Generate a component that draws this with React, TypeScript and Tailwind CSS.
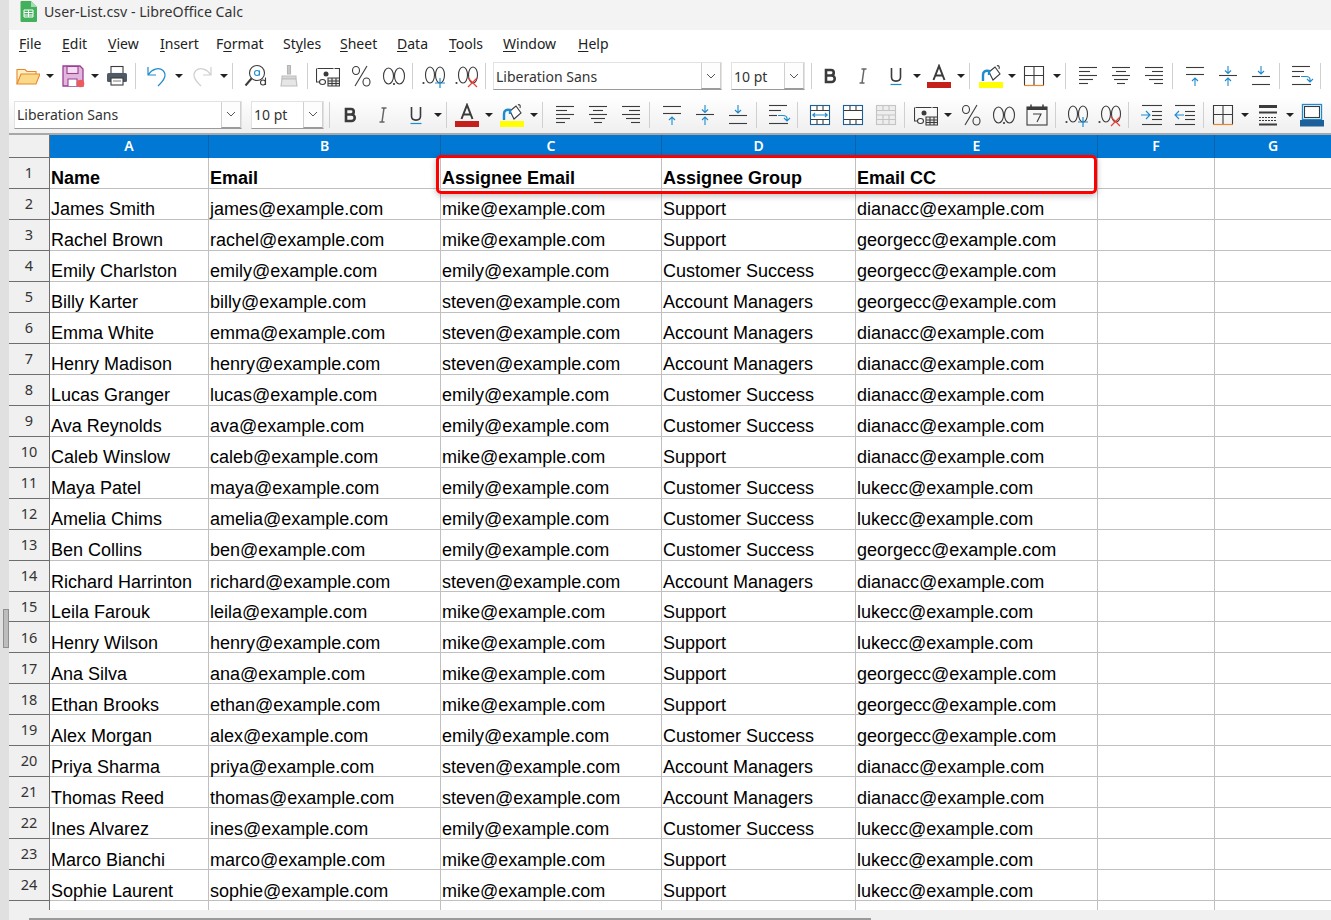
import React from "react";

const DARK = "#3b3b3b";
const BLUE = "#1e8bcd";

const rows = [
  ["James Smith", "james@example.com", "mike@example.com", "Support", "dianacc@example.com"],
  ["Rachel Brown", "rachel@example.com", "mike@example.com", "Support", "georgecc@example.com"],
  ["Emily Charlston", "emily@example.com", "emily@example.com", "Customer Success", "georgecc@example.com"],
  ["Billy Karter", "billy@example.com", "steven@example.com", "Account Managers", "georgecc@example.com"],
  ["Emma White", "emma@example.com", "steven@example.com", "Account Managers", "dianacc@example.com"],
  ["Henry Madison", "henry@example.com", "steven@example.com", "Account Managers", "dianacc@example.com"],
  ["Lucas Granger", "lucas@example.com", "emily@example.com", "Customer Success", "dianacc@example.com"],
  ["Ava Reynolds", "ava@example.com", "emily@example.com", "Customer Success", "dianacc@example.com"],
  ["Caleb Winslow", "caleb@example.com", "mike@example.com", "Support", "dianacc@example.com"],
  ["Maya Patel", "maya@example.com", "emily@example.com", "Customer Success", "lukecc@example.com"],
  ["Amelia Chims", "amelia@example.com", "emily@example.com", "Customer Success", "lukecc@example.com"],
  ["Ben Collins", "ben@example.com", "emily@example.com", "Customer Success", "georgecc@example.com"],
  ["Richard Harrinton", "richard@example.com", "steven@example.com", "Account Managers", "dianacc@example.com"],
  ["Leila Farouk", "leila@example.com", "mike@example.com", "Support", "lukecc@example.com"],
  ["Henry Wilson", "henry@example.com", "mike@example.com", "Support", "lukecc@example.com"],
  ["Ana Silva", "ana@example.com", "mike@example.com", "Support", "georgecc@example.com"],
  ["Ethan Brooks", "ethan@example.com", "mike@example.com", "Support", "georgecc@example.com"],
  ["Alex Morgan", "alex@example.com", "emily@example.com", "Customer Success", "georgecc@example.com"],
  ["Priya Sharma", "priya@example.com", "steven@example.com", "Account Managers", "dianacc@example.com"],
  ["Thomas Reed", "thomas@example.com", "steven@example.com", "Account Managers", "dianacc@example.com"],
  ["Ines Alvarez", "ines@example.com", "emily@example.com", "Customer Success", "lukecc@example.com"],
  ["Marco Bianchi", "marco@example.com", "mike@example.com", "Support", "lukecc@example.com"],
  ["Sophie Laurent", "sophie@example.com", "mike@example.com", "Support", "lukecc@example.com"],
];

const colW = ["w-[159px]", "w-[232px]", "w-[221px]", "w-[194px]", "w-[242px]", "w-[117px]", "w-[117px]"];
const colNames = ["A", "B", "C", "D", "E", "F", "G"];

function Ic({ children }: { children: React.ReactNode }) {
  return (
    <div className="flex h-[33px] w-[33px] shrink-0 items-center justify-center">
      <svg width="24" height="24" viewBox="0 0 24 24" fill="none" strokeWidth="1.1">
        {children}
      </svg>
    </div>
  );
}

function Arrow({ cls = "w-[12px]" }: { cls?: string }) {
  return (
    <div className={"flex shrink-0 justify-center " + cls}>
      <div className="h-0 w-0 border-x-[4px] border-t-[4px] border-x-transparent border-t-[#222]" />
    </div>
  );
}

function Sep({ cls = "w-[8px]" }: { cls?: string }) {
  return (
    <div className={"flex shrink-0 pl-[2px] " + cls}>
      <div className="h-[26px] w-px bg-[#d0d0d0]" />
    </div>
  );
}

function Combo({ label, cls, btn }: { label: string; cls: string; btn: string }) {
  return (
    <div className={"flex h-[28px] shrink-0 items-center justify-between border border-[#e2e2e2] border-b-[#9a9a9a] bg-white " + cls}>
      <span className="pl-[2px] font-['Noto_Sans',sans-serif] text-[14px] text-[#333]">{label}</span>
      <div className={"flex h-[26px] items-center justify-center border-x border-[#d0d0d0] border-b border-b-[#9a9a9a] bg-[#fdfdfd] " + btn}>
        <svg width="10" height="6" viewBox="0 0 10 6" fill="none" stroke="#555" strokeWidth="1">
          <path d="M1 1l4 4 4-4" />
        </svg>
      </div>
    </div>
  );
}

const Lines = ({ ys }: { ys: [number, number, number][] }) => (
  <>
    {ys.map(([y, a, b], i) => (
      <path key={i} d={`M${a} ${y}H${b}`} stroke={DARK} />
    ))}
  </>
);

const AlignLeft = () => (
  <Ic><Lines ys={[[3.5, 3, 21], [7.5, 3, 14], [11.5, 3, 21], [15.5, 3, 17], [19.5, 3, 12]]} /></Ic>
);
const AlignCenter = () => (
  <Ic><Lines ys={[[3.5, 3, 21], [7.5, 7, 17], [11.5, 3, 21], [15.5, 5, 19], [19.5, 8, 16]]} /></Ic>
);
const AlignRight = () => (
  <Ic><Lines ys={[[3.5, 3, 21], [7.5, 10, 21], [11.5, 3, 21], [15.5, 7, 21], [19.5, 12, 21]]} /></Ic>
);
const VTop = () => (
  <Ic>
    <Lines ys={[[3.5, 3, 21], [10.5, 3, 21]]} />
    <path d="M12 22V14M9 17l3-3 3 3" stroke={BLUE} />
  </Ic>
);
const VMid = () => (
  <Ic>
    <Lines ys={[[11.5, 3, 21]]} />
    <path d="M12 2v7M9 6.500l3 3 3-3M12 22v-7M9 17l3-3 3 3" stroke={BLUE} />
  </Ic>
);
const VBot = () => (
  <Ic>
    <Lines ys={[[12.5, 3, 21], [20.5, 3, 21]]} />
    <path d="M12 2v8M9 7l3 3 3-3" stroke={BLUE} />
  </Ic>
);
const Wrap = () => (
  <Ic>
    <Lines ys={[[2.5, 2, 20], [7.5, 2, 14], [12.5, 2, 10], [20.5, 2, 21]]} />
    <path d="M11 12.500h5c3 0 4 1 4 3v2M17 15l3 3 3-3" stroke={BLUE} />
  </Ic>
);
const Bold = () => (
  <Ic>
    <path d="M8 6h5a2.700 2.700 0 0 1 0 5.500H8zM8 11.500h5.500a3 3 0 0 1 0 6.500H8z" stroke={DARK} strokeWidth="2.600" />
  </Ic>
);
const Italic = () => (
  <Ic>
    <path d="M10.500 5h5M8.500 19h5M13 5l-2 14" stroke="#666" strokeWidth="1.500" />
  </Ic>
);
const Under = () => (
  <Ic>
    <path d="M7.500 4v9c0 5.500 9 5.500 9 0V4" stroke={DARK} strokeWidth="1.600" />
    <path d="M6.500 20.500h11" stroke={BLUE} strokeWidth="1.200" />
  </Ic>
);
const FontColor = () => (
  <Ic>
    <path d="M6.500 16L12 2l5.500 14M8.500 11.500h7" stroke={DARK} strokeWidth="2" />
    <rect x="0" y="18" width="24" height="6" fill="#c4201c" />
  </Ic>
);
const BgColor = () => (
  <Ic>
    <path d="M10 8l6-5 5 7-7 6z" stroke={DARK} fill="#fff" />
    <path d="M18 2c1-1 3 0 2 3" stroke={DARK} />
    <path d="M4 17v-6c0-3 2-5 6-4v4" stroke={BLUE} strokeWidth="2.400" />
    <rect x="0" y="18" width="24" height="6" fill="#ffff00" />
  </Ic>
);
const Borders = () => (
  <Ic>
    <path d="M3 2.500h18.500V21M2.500 2v19M12 3v18M3 11.500h18" stroke={DARK} />
    <path d="M2 21.500h20" stroke="#e8872d" strokeWidth="1.200" />
  </Ic>
);
const Percent = () => (
  <Ic>
    <ellipse cx="7" cy="6.500" rx="3.500" ry="4" stroke={DARK} strokeWidth="1.100" />
    <ellipse cx="17.500" cy="18" rx="3.500" ry="4" stroke={DARK} strokeWidth="1.100" />
    <path d="M18 2L6 22" stroke={DARK} strokeWidth="1.100" />
  </Ic>
);
const Num = () => (
  <Ic>
    <ellipse cx="6.500" cy="12" rx="5" ry="8" stroke={DARK} />
    <ellipse cx="17.500" cy="12" rx="5" ry="8" stroke={DARK} />
    <circle cx="12" cy="20" r="1.100" fill={DARK} />
  </Ic>
);
const AddDec = () => (
  <Ic>
    <circle cx="1.500" cy="19" r="1.100" fill={DARK} />
    <ellipse cx="8" cy="11" rx="4.500" ry="8" stroke={DARK} />
    <ellipse cx="18" cy="11" rx="4.500" ry="8" stroke={DARK} />
    <path d="M18 14v10M13 19h10" stroke={BLUE} strokeWidth="1.200" />
  </Ic>
);
const RemDec = () => (
  <Ic>
    <circle cx="1.500" cy="19" r="1.100" fill={DARK} />
    <ellipse cx="8" cy="11" rx="4.500" ry="8" stroke={DARK} />
    <ellipse cx="18" cy="11" rx="4.500" ry="8" stroke={DARK} />
    <path d="M13 14l9 9M22 14l-9 9" stroke="#e5433a" strokeWidth="1.200" />
  </Ic>
);
const Currency = () => (
  <Ic>
    <path d="M3 18H0.500V4.500h23V14" stroke={DARK} strokeDasharray="16 1" />
    <circle cx="10" cy="10" r="2.500" fill={DARK} />
    <ellipse cx="6.500" cy="18" rx="3" ry="2.500" fill="#fff" stroke={DARK} />
    <path d="M12 14h4v8h-4zM16 14h4v8h-4zM20 14h3.500v8H20zM12 17h11M12 19.500h11" stroke={DARK} fill="#e6e6e6" />
  </Ic>
);
const Folder = () => (
  <Ic>
    <path d="M1 20V5.500h8l2 2h9V10" stroke="#e8872d" fill="#fff1c2" />
    <path d="M1 20l4-10h19l-4 10z" stroke="#e8872d" fill="#fbd98b" />
  </Ic>
);
const Save = () => (
  <Ic>
    <path d="M2 2h17l3 3v17H2z" stroke="#9b3f95" fill="#e3b7dd" strokeWidth="1.300" />
    <rect x="6" y="2.500" width="11" height="7" fill="#f3e1f1" stroke="#9b3f95" />
    <path d="M7 22v-7h9v7" stroke="#9b3f95" fill="#fff" />
    <circle cx="19.500" cy="19.500" r="3.800" fill="#ee5b5b" />
  </Ic>
);
const Print = () => (
  <Ic>
    <rect x="6" y="2.500" width="12" height="7" fill="#fff" stroke={DARK} />
    <rect x="2" y="9" width="20" height="9" rx="1.500" fill="#4e5a66" />
    <rect x="6" y="14" width="12" height="7" fill="#fff" stroke={DARK} />
    <path d="M8 17h8" stroke="#888" />
  </Ic>
);
const Undo = () => (
  <Ic>
    <path d="M3 3v8h8M3.500 10.500C7 5 14 3 18 6.500c4 4 2 9-5 15.500" stroke={BLUE} strokeWidth="1.200" />
  </Ic>
);
const Redo = () => (
  <Ic>
    <path d="M21 3v8h-8M20.500 10.500C17 5 10 3 6 6.500c-4 4-2 9 5 15.500" stroke="#cfcfcf" strokeWidth="1.200" />
  </Ic>
);
const Find = () => (
  <Ic>
    <circle cx="13" cy="9" r="7.500" stroke={DARK} />
    <path d="M7.500 14.500L1.500 21.500" stroke={DARK} strokeWidth="2" />
    <circle cx="13" cy="9" r="2.500" stroke={BLUE} />
    <path d="M15.500 6.500v5" stroke={BLUE} />
    <circle cx="19" cy="18.500" r="2.500" stroke={DARK} />
    <path d="M21.500 13.500v7.500" stroke={DARK} />
  </Ic>
);
const Brush = () => (
  <Ic>
    <path d="M10.500 1.500h3V10h-3z" fill="#c9c9c9" stroke="#b5b5b5" />
    <path d="M5 12h14v3H5z" fill="#d8d8d8" stroke="#bdbdbd" />
    <path d="M5 15h14l1 7H4z" fill="#e6e6e6" stroke="#bdbdbd" />
  </Ic>
);
const Table = ({ variant }: { variant: "h" | "v" | "x" }) => {
  const c = variant === "x" ? "#c4c4c4" : "#1d5f99";
  return (
    <Ic>
      <rect x="2.500" y="2.500" width="19" height="19" stroke={c} fill={variant === "x" ? "#eee" : "#fff"} />
      <path d="M3 7.500h18M3 16.500h18M9 3v4M15 3v4M9 17v4M15 17v4" stroke={variant === "x" ? c : DARK} />
      {variant === "x" && <path d="M3 12h18M9 12v5M15 12v5" stroke={c} />}
      {variant === "h" && <path d="M4 12h16M7 10l-2 2 2 2M17 10l2 2-2 2" stroke={BLUE} />}
    </Ic>
  );
};
const Calendar = () => (
  <Ic>
    <rect x="2" y="4" width="20" height="18" stroke={DARK} />
    <path d="M2 4h20v3H2z" fill={DARK} />
    <path d="M6 1.500v3M18 1.500v3" stroke={DARK} strokeWidth="1.500" />
    <path d="M8 11h8l-4 8" stroke={DARK} />
  </Ic>
);
const Indent = ({ dir }: { dir: "in" | "out" }) => (
  <Ic>
    <Lines ys={[[2.500, 2, 22], [8.500, 12, 22], [12.500, 12, 22], [16.500, 12, 22], [21.500, 2, 22]]} />
    {dir === "in" ? (
      <path d="M1 12h8M6 8l4 4-4 4" stroke={BLUE} />
    ) : (
      <path d="M11 12H3M6 8l-4 4 4 4" stroke={BLUE} />
    )}
  </Ic>
);
const LineStyle = () => (
  <Ic>
    <path d="M3 3.500h18" stroke={DARK} strokeWidth="3" />
    <path d="M3 9.500h18" stroke={DARK} strokeWidth="2" />
    <path d="M3 14.500h18M3 17.500h18" stroke={DARK} strokeDasharray="2 1" />
    <path d="M3 21.500h18" stroke={DARK} strokeWidth="2" />
  </Ic>
);
const BorderColor = () => (
  <Ic>
    <rect x="2.500" y="1.500" width="19" height="15" stroke={BLUE} fill="#fff" strokeWidth="1.300" />
    <rect x="4.500" y="3.500" width="15" height="11" stroke={DARK} fill="#fff" />
    <rect x="0" y="17" width="24" height="6.500" fill="#1d5f99" />
  </Ic>
);

function CalcLogo() {
  return (
    <svg width="17" height="21" viewBox="0 0 17 21">
      <path d="M1.500 0H11l6 6v14a1 1 0 0 1-1 1H1.500a1 1 0 0 1-1-1V1a1 1 0 0 1 1-1z" fill="#43b05c" />
      <path d="M11 0l6 6h-6z" fill="#a6dcb1" />
      <path d="M4 9h9v7H4z" fill="none" stroke="#fff" />
      <path d="M4 11.500h9M4 14h9M8.500 9v7" stroke="#fff" />
    </svg>
  );
}

function Menu() {
  const items: [string, string, string, string][] = [
    ["", "F", "ile", "w-[43px]"],
    ["", "E", "dit", "w-[46px]"],
    ["", "V", "iew", "w-[52px]"],
    ["", "I", "nsert", "w-[56px]"],
    ["F", "o", "rmat", "w-[67px]"],
    ["St", "y", "les", "w-[57px]"],
    ["", "S", "heet", "w-[57px]"],
    ["", "D", "ata", "w-[52px]"],
    ["", "T", "ools", "w-[54px]"],
    ["", "W", "indow", "w-[75px]"],
    ["", "H", "elp", "w-[40px]"],
  ];
  return (
    <div className="flex h-[30px] items-center bg-white pb-[2px] pl-[10px] font-['Noto_Sans',sans-serif] text-[14px] text-[#222]">
      {items.map(([a, u, b, w]) => (
        <span key={a + u + b} className={"shrink-0 whitespace-nowrap " + w}>
          {a}
          <span className="underline underline-offset-2">{u}</span>
          {b}
        </span>
      ))}
    </div>
  );
}

function ToolbarOne() {
  return (
    <div className="flex h-[33px] items-center pl-[2px]">
      <Folder /><Arrow />
      <Save /><Arrow cls="w-[11px]" />
      <Print /><Sep cls="w-[7px]" />
      <Undo /><Arrow />
      <Redo /><Arrow />
      <Sep cls="w-[9px]" />
      <Find /><Brush /><Sep cls="w-[6px]" />
      <Currency /><Percent /><Num /><Sep cls="w-[7px]" />
      <AddDec /><RemDec /><Sep cls="w-[10px]" />
      <Combo label="Liberation Sans" cls="w-[229px]" btn="w-[20px]" />
      <div className="w-[9px]" />
      <Combo label="10 pt" cls="w-[74px]" btn="w-[20px]" />
      <Sep cls="w-[8px] pl-[6px]" />
      <Bold /><Italic /><Under /><Arrow cls="w-[10px]" />
      <FontColor /><Arrow /><Sep cls="w-[7px]" />
      <BgColor /><Arrow cls="w-[10px]" />
      <Borders /><Arrow cls="w-[13px]" /><Sep />
      <AlignLeft /><AlignCenter /><AlignRight /><Sep />
      <VTop /><VMid /><VBot /><Sep />
      <Wrap /><Sep />
    </div>
  );
}

function ToolbarTwo() {
  return (
    <div className="flex h-[40px] items-center pl-[5px] pt-[4px]">
      <Combo label="Liberation Sans" cls="w-[228px]" btn="w-[20px]" />
      <div className="w-[9px]" />
      <Combo label="10 pt" cls="w-[73px]" btn="w-[20px]" />
      <Sep cls="w-[9px] pl-[5px]" />
      <Bold /><Italic /><Under /><Arrow />
      <Sep cls="w-[6px]" />
      <FontColor /><Arrow />
      <BgColor /><Arrow /><Sep />
      <AlignLeft /><AlignCenter /><AlignRight /><Sep />
      <VTop /><VMid /><VBot /><Sep />
      <Wrap /><Sep />
      <Table variant="h" /><Table variant="v" /><Table variant="x" /><Sep cls="w-[7px]" />
      <Currency /><Arrow />
      <Percent /><Num /><Calendar /><Sep cls="w-[7px]" />
      <AddDec /><RemDec /><Sep cls="w-[9px]" />
      <Indent dir="in" /><Indent dir="out" /><Sep cls="w-[5px]" />
      <Borders /><Arrow /><LineStyle /><Arrow cls="w-[11px]" /><BorderColor />
    </div>
  );
}

function Cell({ w, text, bold, low }: { w: string; text?: string; bold?: boolean; low?: boolean }) {
  return (
    <div
      className={
        "flex h-full shrink-0 items-end overflow-visible whitespace-nowrap border-r border-[#c0c0c0] pl-[1px] text-[18px] leading-[20px] text-black " +
        w +
        (bold ? " font-bold" : "")
      }
    >
      <span className={low ? "translate-y-[1px]" : ""}>{text}</span>
    </div>
  );
}

function Row({ n, cells, bold }: { n: number; cells: string[]; bold?: boolean }) {
  return (
    <div className="flex h-[31px] border-b border-[#c0c0c0]">
      <div className="flex w-[41px] shrink-0 items-center justify-center border-r border-[#6e6e6e] bg-[#f0f0f0] font-['Noto_Sans',sans-serif] text-[14.500px] text-[#333] [box-shadow:0_1px_0_#6e6e6e]">
        {n}
      </div>
      {colW.map((w, i) => (
        <Cell key={i} w={w} text={cells[i]} bold={bold} low={n >= 14} />
      ))}
    </div>
  );
}

export default function App() {
  return (
    <div className="flex h-[920px] w-[1331px] overflow-hidden bg-white font-['Liberation_Sans',Arial,sans-serif]">
      <div className="relative w-[9px] shrink-0 bg-[#e0e0e0]">
        <div className="absolute left-[3px] top-[609px] h-[39px] w-[6px] border border-[#8f8f8f] bg-[#bdbdbd]" />
      </div>
      <div className="relative flex min-w-0 flex-1 flex-col">
        <div className="flex h-[30px] items-center gap-[7px] bg-[#f3f3f3] pb-[6px] pl-[11px] font-['Noto_Sans',sans-serif] text-[14.200px] text-[#333]">
          <CalcLogo />
          <span>User-List.csv - LibreOffice Calc</span>
        </div>
        <Menu />
        <div className="h-[75px] border-b-2 border-[#a8a8a8] bg-gradient-to-b from-white from-50% to-[#efefef]">
          <ToolbarOne />
          <ToolbarTwo />
        </div>
        <div className="flex h-[23px] bg-[#0078d4]">
          <div className="w-[41px] shrink-0 border-r border-b border-[#6e6e6e] bg-[#f0f0f0]" />
          {colW.map((w, i) => (
            <div
              key={i}
              className={
                "flex shrink-0 items-center justify-center border-r border-[#0a62ab] pb-[2px] font-['Noto_Sans',sans-serif] text-[14px] font-semibold text-white " +
                w
              }
            >
              {colNames[i]}
            </div>
          ))}
        </div>
        <Row n={1} cells={["Name", "Email", "Assignee Email", "Assignee Group", "Email CC"]} bold />
        {rows.map((r, i) => (
          <Row key={i} n={i + 2} cells={r} />
        ))}
        <div className="flex h-[9px]">
          <div className="w-[41px] shrink-0 border-r border-[#6e6e6e] bg-[#f0f0f0]" />
          {colW.map((w, i) => (
            <div key={i} className={"shrink-0 border-r border-[#c0c0c0] " + w} />
          ))}
        </div>
        <div className="flex-1 bg-[#f0f0f0]">
          <div className="ml-[20px] mt-[8px] h-[2px] w-[842px] bg-[#9a9a9a]" />
        </div>
        <div className="pointer-events-none absolute left-[427px] top-[155px] h-[39px] w-[661px] rounded-[5px] border-[3px] border-[#ff0000] shadow-[0_2px_6px_rgba(0,0,0,0.25)]" />
      </div>
    </div>
  );
}
